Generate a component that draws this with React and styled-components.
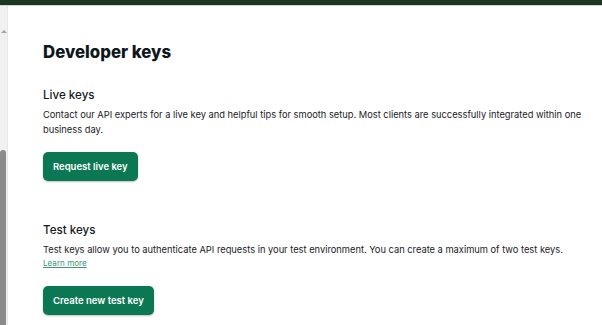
import styled, { createGlobalStyle } from "styled-components";

const GlobalStyle = createGlobalStyle`
  html, body {
    margin: 0;
    padding: 0;
    background: #ffffff;
  }
  body {
    font-family: Inter, "Liberation Sans", sans-serif;
    color: #1c2124;
  }
`;

export default function App() {
  return (
    <>
      <GlobalStyle />
      <Page>
        <TopBar />
        <Body>
          <ScrollTrack>
            <Arrow />
            <Thumb />
          </ScrollTrack>
          <Main>
            <Title>Developer keys</Title>

            <Section $top={24}>
              <SectionTitle>Live keys</SectionTitle>
              <Text>
                Contact our API experts for a live key and helpful tips for smooth setup. Most clients are successfully
                integrated within one business day.
              </Text>
              <Button $top={14.6}>Request live key</Button>
            </Section>

            <Section $top={40.8}>
              <SectionTitle>Test keys</SectionTitle>
              <Text>
                Test keys allow you to authenticate API requests in your test environment. You can create a maximum of
                two test keys.
              </Text>
              <LearnMore href="#">Learn more</LearnMore>
              <Button $top={17.5}>Create new test key</Button>
            </Section>
          </Main>
        </Body>
      </Page>
    </>
  );
}

const Page = styled.div`
  width: 602px;
  height: 325px;
  overflow: hidden;
  display: flex;
  flex-direction: column;
`;

const TopBar = styled.div`
  height: 5px;
  flex-shrink: 0;
  background: #1b3623;
  border-bottom: 1px solid #cfd6d0;
`;

const Body = styled.div`
  flex: 1;
  display: flex;
`;

const ScrollTrack = styled.div`
  width: 7px;
  flex-shrink: 0;
  background: #f1f1f1;
  border-right: 1px solid #e4e8e8;
  display: flex;
  flex-direction: column;
  align-items: flex-start;
`;

const Arrow = styled.div`
  margin-top: 24px;
  margin-left: 1px;
  width: 0;
  height: 0;
  border-left: 3px solid transparent;
  border-right: 3px solid transparent;
  border-bottom: 3px solid #a3a3a3;
`;

const Thumb = styled.div`
  margin-top: 117px;
  width: 6px;
  flex: 1;
  background: #8b8b8b;
  border-radius: 3px 3px 0 0;
`;

const Main = styled.div`
  flex: 1;
  padding: 35.4px 0 0 35px;
`;

const Title = styled.h1`
  margin: 0;
  font-size: 16.8px;
  line-height: 22px;
  font-weight: 800;
  color: #0e181c;
`;

const Section = styled.section`
  margin-top: ${(props) => props.$top}px;
`;

const SectionTitle = styled.h2`
  margin: 0;
  font-size: 11.6px;
  line-height: 16px;
  font-weight: 500;
  color: #151b1e;
`;

const Text = styled.p`
  margin: 4px 0 0;
  max-width: 548px;
  font-size: 9.3px;
  line-height: 15px;
  color: #1b2125;
`;

const LearnMore = styled.a`
  display: block;
  margin-top: 1px;
  font-size: 8.1px;
  line-height: 11px;
  color: #3f9678;
  text-decoration: underline;
`;

const Button = styled.button`
  display: block;
  margin-top: ${(props) => props.$top}px;
  height: 29px;
  padding: 0 10px;
  border: none;
  border-radius: 5px;
  background: #0c7853;
  color: #ffffff;
  font-family: Inter, "Liberation Sans", sans-serif;
  font-size: 9.5px;
  font-weight: 600;
  box-shadow: 0 1px 2px rgba(0, 0, 0, 0.25);
  cursor: pointer;
`;
